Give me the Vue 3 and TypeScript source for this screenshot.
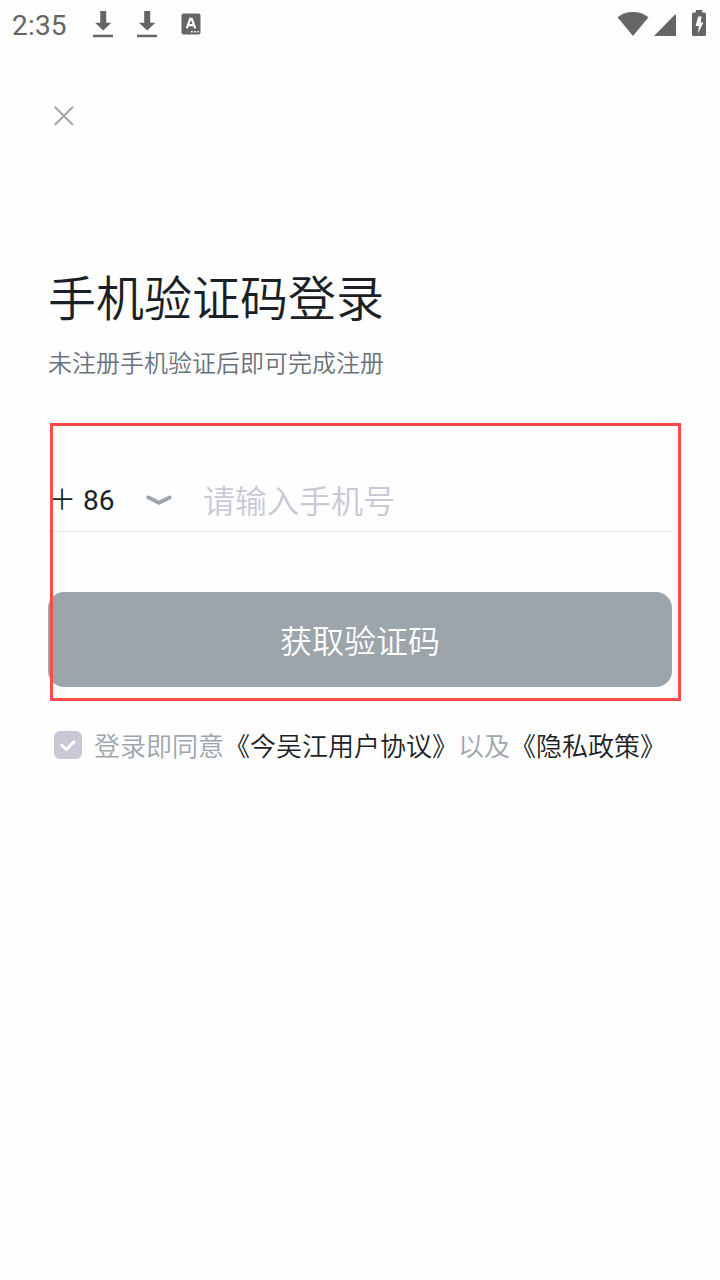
<script setup lang="ts">
import { ref } from 'vue'

const dialCode = ref('＋ 86')
const phone = ref('')
</script>

<template>
  <div class="screen">
    <header class="status">
      <span class="clock">2:35</span>
      <svg v-for="n in 2" :key="n" class="download" width="20" height="28" viewBox="0 0 20 28">
        <path d="M7.200 1h6v11.800h5.200L10.200 20.500 2 12.800h5.200z" />
        <path d="M0 24.700h20v2.500H0z" />
      </svg>
      <svg class="app-badge" width="20" height="22" viewBox="0 0 20 22">
        <rect x="0.500" y="0.500" width="19" height="21" rx="2" />
        <path d="M5.800 15.300l3.400-9.500h1.600l3.400 9.500M7.200 12.200h5.600" fill="none" stroke="#fff" stroke-width="2.200" />
        <path d="M10 18h1.800v1.600H10zM13 18h1.800v1.600H13zM16 18h1.800v1.600H16z" fill="#fff" />
      </svg>
      <div class="system">
        <svg class="wifi" width="32" height="24" viewBox="0 0 32 24">
          <path d="M16 24L0.500 5.200C5 1.800 10.300 0 16 0s11 1.800 15.500 5.200z" />
        </svg>
        <svg class="signal" width="23" height="22" viewBox="0 0 23 22">
          <path d="M0 22L20.500 1Q22 -0.300 22 1.500V22z" />
        </svg>
        <svg class="battery" width="14" height="26" viewBox="0 0 14 26">
          <path d="M3.800 0h6.400v2.600h2.300Q14 2.600 14 4.200v20.200q0 1.600-1.500 1.600h-11Q0 26 0 24.400V4.200q0-1.600 1.500-1.600h2.300z" />
          <path d="M6.200 6.500h3.400l-1 6h2.800L6 23.500l.8-7.500H3.500z" fill="#fff" />
        </svg>
      </div>
    </header>

    <button class="close" type="button" aria-label="关闭">
      <svg width="20" height="20" viewBox="0 0 20 20">
        <path d="M0.700 0.700l18.300 18.300M19 0.700L0.700 19" fill="none" stroke="#9da5ad" stroke-width="2" />
      </svg>
    </button>

    <main class="login">
      <h1>手机验证码登录</h1>
      <p class="hint">未注册手机验证后即可完成注册</p>

      <form class="form" @submit.prevent>
        <div class="phone-row">
          <span class="dial">{{ dialCode }}</span>
          <svg class="chevron" width="26" height="12" viewBox="0 0 26 12">
            <path d="M2.500 2.500L13 7.800 23.500 2.500" fill="none" stroke="#9da5ad" stroke-width="4" stroke-linecap="round" />
          </svg>
          <input v-model="phone" class="phone" type="tel" placeholder="请输入手机号" />
        </div>
        <button class="submit" type="submit">获取验证码</button>
        <div class="highlight"></div>
      </form>

      <div class="agreement">
        <svg width="28" height="28" viewBox="0 0 28 28">
          <rect width="28" height="28" rx="6" fill="#c9c8d5" />
          <path d="M7.800 14.200l4.500 4.300 7.700-7.700" fill="none" stroke="#fff" stroke-width="2.900" stroke-linecap="round" />
        </svg>
        <span class="terms">登录即同意<a>《今吴江用户协议》</a>以及<a>《隐私政策》</a></span>
      </div>
    </main>
  </div>
</template>

<style>
html,
body {
  background: #fefefe;
}
</style>

<style scoped>
.screen {
  width: 720px;
  height: 1280px;
  overflow: hidden;
  background: #fefefe;
  color: #1b1f26;
  font-family: Roboto, "Noto Sans CJK SC DemiLight", "Noto Sans CJK SC", sans-serif;
  font-weight: 350;
}

svg {
  display: block;
  flex: none;
}

.status {
  box-sizing: border-box;
  display: flex;
  align-items: flex-start;
  height: 48px;
  padding: 10px 14px 0 12px;
  fill: #656565;
}

.clock {
  width: 81px;
  color: #656565;
  font-size: 28px;
  font-weight: 450;
  letter-spacing: 0.2px;
  line-height: 32px;
}

.download {
  margin-right: 24px;
}

.app-badge {
  margin: 3px 0 0;
}

.system {
  display: flex;
  align-items: flex-start;
  margin-left: auto;
}

.wifi {
  margin: 2px 5px 0 0;
}

.signal {
  margin: 4px 15px 0 0;
}

.close {
  display: block;
  margin: 58px 0 0 54px;
  padding: 0;
  border: 0;
  background: none;
}

.login {
  padding: 140px 48px 0;
}

h1 {
  margin: 0;
  font-size: 48px;
  font-weight: 350;
  line-height: 68px;
}

.hint {
  margin: 13px 0 0;
  color: #69727b;
  font-size: 24px;
  line-height: 34px;
}

.form {
  position: relative;
  margin-top: 86px;
}

.phone-row {
  display: flex;
  align-items: center;
  box-sizing: border-box;
  height: 65px;
  padding-top: 3px;
  border-bottom: 1px solid #ebebee;
}

.dial {
  width: 98px;
  font-size: 28px;
  font-weight: 390;
  line-height: 40px;
  white-space: nowrap;
}

.chevron {
  margin-right: 31px;
}

.phone {
  flex: 1;
  min-width: 0;
  height: 48px;
  padding: 2px 0 0;
  border: 0;
  outline: 0;
  background: transparent;
  color: inherit;
  font: inherit;
  font-size: 32px;
  line-height: 46px;
}

.phone::placeholder {
  color: #c9c8d5;
  opacity: 1;
}

.submit {
  display: block;
  width: 100%;
  height: 95px;
  margin-top: 60px;
  padding: 4px 0 0;
  border: 0;
  border-radius: 16px;
  background: #9da5ac;
  color: #fff;
  font: inherit;
  font-size: 32px;
  line-height: 48px;
}

.highlight {
  position: absolute;
  top: -44px;
  left: 2px;
  box-sizing: border-box;
  width: 631px;
  height: 278px;
  border: 3px solid #fd4a4a;
  pointer-events: none;
}

.agreement {
  display: flex;
  align-items: center;
  height: 28px;
  margin: 44px 0 0 6px;
}

.terms {
  margin-left: 12px;
  padding-top: 3px;
  color: #9da5ad;
  font-size: 26px;
  line-height: 38px;
  white-space: nowrap;
}

.terms a {
  color: #1b1f26;
}
</style>
